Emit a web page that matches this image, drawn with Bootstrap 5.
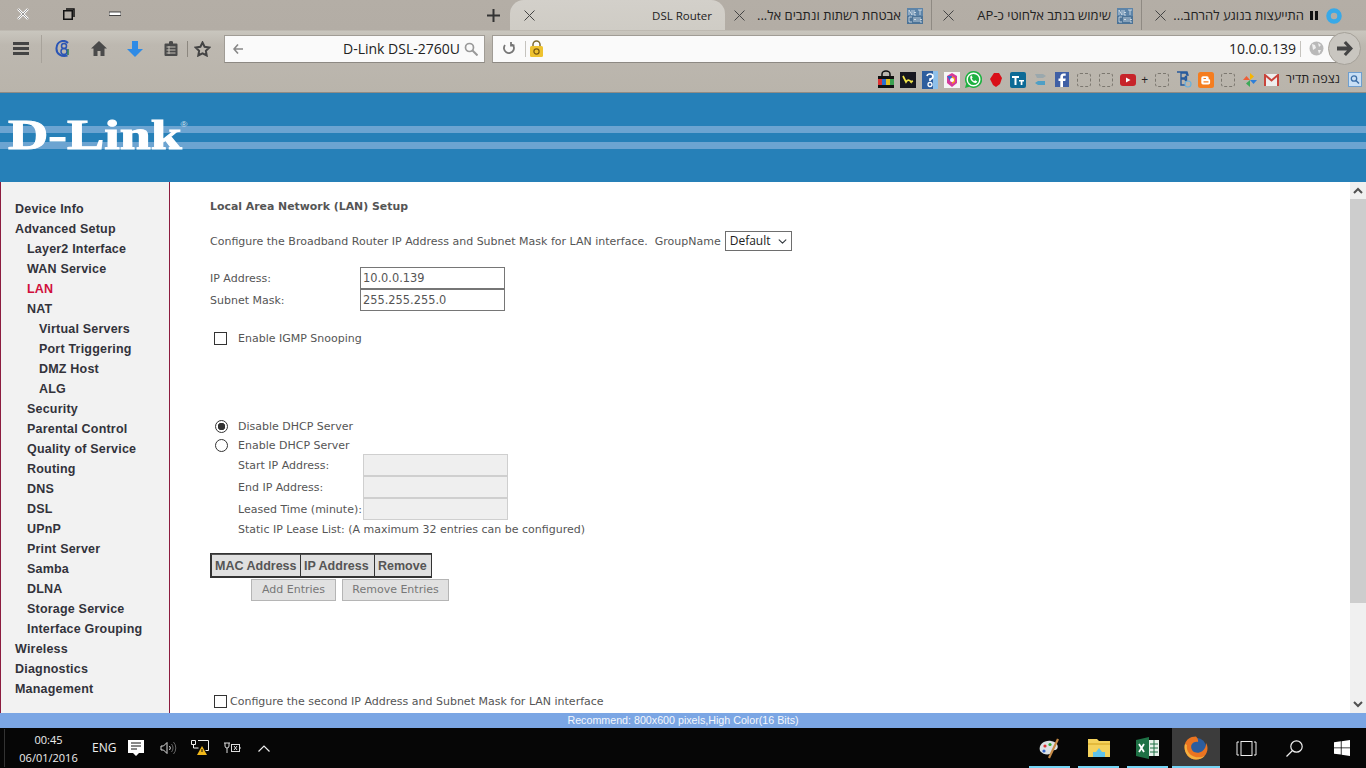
<!DOCTYPE html>
<html lang="en">
<head>
<meta charset="utf-8">
<title>DSL Router</title>
<link href="https://cdn.jsdelivr.net/npm/bootstrap@5.3.0/dist/css/bootstrap.min.css" rel="stylesheet">
<style>
html,body{height:100%;overflow:hidden;margin:0;background:#000}
body{font-family:"DejaVu Sans","Liberation Sans",sans-serif}
.shell{height:768px;width:1366px}
.chromebar{height:93px;flex:none;border-bottom:1px solid #8f8b85;background:linear-gradient(180deg,#b4aea6 0,#b3ada5 30px,#c9c6be 31px,#bdb8b0 45px,#b9b4ab 92px);font-family:"Open Sans","Noto Sans","Liberation Sans",sans-serif;color:#222}
.tabrow{height:30px;flex:none}
.winbtn{width:46px;height:28px}
.newtab{margin-left:339px;width:33px;height:30px}
.tabitem{height:30px;font-size:13px;white-space:nowrap;padding-top:1px}
.tabon{width:215px;background:linear-gradient(180deg,#d3d0ca,#cfccc5);border-radius:14px 14px 0 0;padding:1px 13px 0 10px;font-size:11.5px}
.taboff{padding:1px 8px 0 5px;border-right:1px solid #8f8a83}
.tabw2{width:207px}.tabw3{width:210px}.tabw4{width:224px;border-right:0;padding-right:24px}
.ttl{flex:1;text-align:right;padding-right:6px}
.navrow{height:37px;flex:none}
.hamb{width:42px;border-right:1px solid #a8a39b;height:28px}
.tbtn{width:36px;height:28px}
.tbtn1{margin-left:3px}
.starb{margin-left:-3px}
.tsep{width:1px;height:16px;background:#8c877f;margin:0 -1px 0 -2px}
.addr{height:28px;background:#fafafa;border:1px solid #a09c95;border-bottom-color:#8d8983;font-size:14px;color:#222}
.srch{width:261px;margin-left:4px;padding:0 6px 0 4px}
.urlb{flex:1;margin-left:7px;margin-right:-12px;padding:0 11px 0 6px}
.gocirc{width:33px;height:33px;border-radius:50%;border:1px solid #a5a199;background:#c9c6c0;position:relative;margin-right:5px;flex:none}
.vsep{width:1px;height:16px;background:#c5c3be}
.bookrow{height:25px;margin-top:0;flex:none}
.bk{width:20px;height:20px;margin-left:2px;flex:none;display:flex;align-items:center;justify-content:center}
.bkplus{width:10px;font-size:12px;line-height:1}
.bklast{margin-right:1px}
.bkdash{width:14px;height:14px;border:1px dashed #7c7870;border-radius:3px}
.bktxt{font-size:12.5px;margin:0 3px 0 4px;color:#222;white-space:nowrap}
.banner{height:89px;flex:none;background:linear-gradient(180deg,#2680b8 0,#2680b8 33px,#6ca4d1 33px,#6ca4d1 40px,#2680b8 40px,#2680b8 49px,#6ca4d1 49px,#6ca4d1 56px,#2680b8 56px)}
.logo{font-family:"Liberation Serif",serif;font-weight:700;color:#fff;font-size:42px;line-height:40px;transform:scaleX(1.33);transform-origin:left center;margin-left:8px;margin-top:22px;display:inline-block;-webkit-text-stroke:1px #fff}
.logo sup{font-size:7px;font-weight:400;top:-22px;margin-left:-1px;opacity:.8;font-family:"Liberation Sans",sans-serif;-webkit-text-stroke:0}
.workarea{height:531px;flex:none;background:#fff;overflow:hidden}
.sidemenu{width:170px;flex:none;background:#f2f2f2;border-left:1px solid #8c1c3f;border-right:1px solid #8c1c3f;padding-top:17px}
.sidemenu a{display:block;height:20px;line-height:20px;font-weight:700;font-size:12.5px;font-family:"Liberation Sans",sans-serif;letter-spacing:.2px;color:#33333b;text-decoration:none;white-space:nowrap}
.sidemenu a.lv1{padding-left:14px}.sidemenu a.lv2{padding-left:26px}.sidemenu a.lv3{padding-left:38px}
.sidemenu a.cur{color:#d00f3c}
.pane{flex:1;padding:0 0 0 40px;color:#555;font-size:11px;line-height:14px;white-space:nowrap;overflow:hidden}
.paneh{font-weight:700;font-size:10.9px;margin-top:18px;height:14px;color:#555}
.intro{margin-top:17px;height:20px}
.intro span,.iplab,.igmp span,.dhrow span,.leaselab,.staticl,.second span{padding-top:1px}
.sel{width:67px;height:20px;padding:0 0 0 4px;font-size:12px;line-height:18px;border:1px solid #6e6e6e;border-radius:0;color:#222;margin-left:4px;background-position:right 3px center;background-size:11px 9px;font-family:"Open Sans",sans-serif}
.ipform{margin-top:16px}
.iprow{height:22px}
.iplab{width:150px}
.ipin{width:145px;height:22px;padding:0 2px;border:1px solid #767676;border-radius:0;font-size:11.4px;color:#555;line-height:20px;font-family:"DejaVu Sans",sans-serif}
.ipin.off{background:#efefef;border-color:#cfcfcf}
.form-check-input.box{width:13px;height:13px;margin:0;border:1px solid #333;border-radius:0;flex:none}
.form-check-input.rad{width:13px;height:13px;margin:0;border:1px solid #333;flex:none}
.form-check-input.rad:checked{background-color:#fff;border-color:#333;background-image:radial-gradient(circle,#333 0,#333 3.5px,transparent 4px)}
.igmp{margin-top:20px;height:14px;padding-left:4px;gap:11px}
.dhcp{margin-top:72px;padding-left:5px}
.dhrow{height:19px;gap:10px}
.dhrow2{height:18px}
.leasewrap{padding-left:28px}
.leasew{height:22px}
.leaselab{width:125px}
.staticl{height:17px;line-height:17px}
.macgrid{margin-top:16px;width:222px;border:1px solid #333;border-bottom:2px solid #333;background:#e0e0e0;font-family:"Liberation Sans",sans-serif;font-weight:700;font-size:12.5px;color:#555}
.mcell{height:22px;line-height:22px;padding:0 3px;border-left:1px solid #333;border-top:1px solid #555}
.mw1{width:89px}.mw2{width:74px}.mw3{width:57px}
.actrow{margin-left:41px;gap:6px;margin-top:1px}
.grbtn{height:22px;padding:0;border:1px solid #b5b5b5;border-radius:0;background:#e1e1e1;color:#777;font-size:11px;line-height:20px;font-family:"DejaVu Sans",sans-serif;opacity:1}
.gw1{width:85px}.gw2{width:107px}
.second{margin-top:93px;padding-left:4px;gap:3px}
.sbar{width:16px;flex:none;background:#f0f0f0}
.sbtn{height:17px;background:#f0f0f0}
.sthumb{height:404px;background:#cdcdcd}
.statusline{height:15px;flex:none;background:#7ba6e4;color:#f4f7fc;font:10.7px/15px "Liberation Sans",sans-serif;text-align:center}
.taskb{height:40px;flex:none;background:#060606;color:#eee;font-family:"Open Sans","Noto Sans",sans-serif}
.clockb{width:88px;margin-left:4px;border-left:1px solid #333;text-align:center;font-size:11px;line-height:18px;padding-top:2px}
.trayi{width:32px;height:40px}
.engt{font-size:12px;width:22px;text-align:center;margin-right:6px;flex:none;white-space:nowrap}
.pinb{width:49px;height:40px;position:relative}
.pinb::after{content:"";position:absolute;left:4px;right:4px;bottom:0;height:2px;background:#75d4f5}
.pinon{background:#3c3c3c;width:48px;margin-right:2px}
.pinon::after{left:0;right:0}
.sysb{width:48px;height:40px}
</style>
</head>
<body>
<div class="shell d-flex flex-column">
  <div class="chromebar d-flex flex-column">
    <div class="tabrow d-flex">
      <div class="winbtn d-flex align-items-center justify-content-center"><svg width="12" height="12" viewBox="0 0 12 12"><path d="M1 1l10 10M11 1L1 11" stroke="#fff" stroke-width="2.4"/><path d="M1 1l10 10M11 1L1 11" stroke="#333" stroke-width=".5"/></svg></div>
      <div class="winbtn d-flex align-items-center justify-content-center"><svg width="12" height="12" viewBox="0 0 12 12"><rect x=".75" y="2.75" width="8.5" height="8.5" fill="none" stroke="#111" stroke-width="1.5"/><path d="M3 1h8v8" fill="none" stroke="#111" stroke-width="1.5"/></svg></div>
      <div class="winbtn d-flex align-items-center justify-content-center"><svg width="12" height="6" viewBox="0 0 12 6"><rect y="1" width="12" height="3.4" fill="#fff" stroke="#222" stroke-width=".8"/></svg></div>
      <div class="newtab d-flex align-items-center justify-content-center"><svg width="13" height="13" viewBox="0 0 13 13"><path d="M6.500 0v13M0 6.500h13" stroke="#333" stroke-width="2"/></svg></div>
      <div class="tabitem tabon d-flex align-items-center"><svg width="11" height="11" viewBox="0 0 11 11" class="ms-1"><path d="M.5.5l10 10M10.500.5l-10 10" stroke="#444" stroke-width="1"/></svg><span class="ttl pe-0">DSL Router</span></div>
      <div class="tabitem taboff tabw2 d-flex align-items-center"><svg width="11" height="11" viewBox="0 0 11 11" class="ms-1"><path d="M.5.5l10 10M10.500.5l-10 10" stroke="#444" stroke-width="1"/></svg><span class="ttl" dir="rtl">אבטחת רשתות ונתבים אל...</span><svg width="16" height="16" viewBox="0 0 16 16"><rect width="16" height="16" fill="#5d84a8"/><rect y="8" width="16" height="8" fill="#4c7397"/><path d="M2 7V2l3 5V2M7 2v5h2M7 4.500h2M11 2h4M13 2v5M2 9h3M2 9v5h3M7 9v5M9 9v5M7 11.500h2M11 9v5M13 9v5h2M13 11.500h2" stroke="#dde6ee" stroke-width=".8" fill="none"/></svg></div>
      <div class="tabitem taboff tabw3 d-flex align-items-center"><svg width="11" height="11" viewBox="0 0 11 11" style="margin-left:6px"><path d="M.5.5l10 10M10.500.5l-10 10" stroke="#444" stroke-width="1"/></svg><span class="ttl" dir="rtl">שימוש בנתב אלחוטי כ-AP</span><svg width="16" height="16" viewBox="0 0 16 16"><rect width="16" height="16" fill="#5d84a8"/><rect y="8" width="16" height="8" fill="#4c7397"/><path d="M2 7V2l3 5V2M7 2v5h2M7 4.500h2M11 2h4M13 2v5M2 9h3M2 9v5h3M7 9v5M9 9v5M7 11.500h2M11 9v5M13 9v5h2M13 11.500h2" stroke="#dde6ee" stroke-width=".8" fill="none"/></svg></div>
      <div class="tabitem taboff tabw4 d-flex align-items-center"><svg width="11" height="11" viewBox="0 0 11 11" class="ms-2"><path d="M.5.5l10 10M10.500.5l-10 10" stroke="#444" stroke-width="1"/></svg><span class="ttl" dir="rtl">התייעצות בנוגע להרחב...</span><svg width="8" height="9" viewBox="0 0 8 9" class="me-2"><path d="M0 0h3v9H0zM5 0h3v9H5z" fill="#111"/></svg><svg width="16" height="16" viewBox="0 0 16 16"><circle cx="8" cy="8" r="5.500" fill="none" stroke="#38a9e8" stroke-width="4.500"/></svg></div>
    </div>
    <div class="navrow d-flex align-items-center">
      <div class="hamb d-flex align-items-center justify-content-center"><svg width="16" height="13" viewBox="0 0 16 13"><path d="M0 0h16v3H0zM0 5h16v3H0zM0 10h16v3H0z" fill="#444"/></svg></div>
      <div class="tbtn tbtn1 d-flex align-items-center justify-content-center"><svg width="16" height="18" viewBox="0 0 16 18"><path d="M13 3C9-1 2 1 1.500 8c-.4 6 5 9 11 7.500" fill="none" stroke="#2a55b5" stroke-width="2"/><circle cx="9" cy="6" r="2.500" fill="none" stroke="#2a55b5" stroke-width="1.500"/><circle cx="9" cy="11.500" r="3" fill="none" stroke="#2a55b5" stroke-width="1.500"/><path d="M13 9v6" stroke="#2a7a55" stroke-width="1.500"/></svg></div>
      <div class="tbtn d-flex align-items-center justify-content-center"><svg width="16" height="15" viewBox="0 0 16 15"><path d="M8 0L0 7.500h2.500V15h4v-5h3v5h4V7.500H16z" fill="#4a4a4a"/></svg></div>
      <div class="tbtn d-flex align-items-center justify-content-center"><svg width="16" height="16" viewBox="0 0 16 16"><path d="M5 0h6v8h5l-8 8-8-8h5z" fill="#2f8be6"/></svg></div>
      <div class="tbtn d-flex align-items-center justify-content-center"><svg width="14" height="15" viewBox="0 0 14 15"><path d="M1.500 2.500h3.500V1a2 1 0 0 1 4 0v1.500h3.500a1 1 0 0 1 1 1V14a1 1 0 0 1-1 1h-11a1 1 0 0 1-1-1V3.500a1 1 0 0 1 1-1z" fill="#4a4a4a"/><path d="M2.500 6h9M2.500 9h9M2.500 12h9" stroke="#c3bfb7" stroke-width="1"/><path d="M5 5v8" stroke="#c3bfb7" stroke-width="1"/></svg></div>
      <div class="tsep"></div>
      <div class="tbtn starb d-flex align-items-center justify-content-center"><svg width="17" height="16" viewBox="0 0 17 16"><path d="M8.500 1.500l2.100 4.300 4.700.7-3.400 3.300.8 4.700-4.200-2.200-4.200 2.200.8-4.700L1.700 6.500l4.700-.7z" fill="none" stroke="#444" stroke-width="2"/></svg></div>
      <div class="addr srch d-flex align-items-center"><svg width="10" height="10" viewBox="0 0 10 10" class="ms-1"><path d="M5 .5L1 5l4 4.500M1.500 5H10" fill="none" stroke="#888" stroke-width="1.600"/></svg><span class="flex-grow-1 text-end">D-Link DSL-2760U</span><svg width="14" height="14" viewBox="0 0 14 14" class="ms-1"><circle cx="5.500" cy="5.500" r="4" fill="none" stroke="#999" stroke-width="1.700"/><path d="M8.500 8.500l5 5" stroke="#999" stroke-width="2"/></svg></div>
      <div class="addr urlb d-flex align-items-center"><svg width="14" height="14" viewBox="0 0 14 14" class="ms-1"><path d="M12 3a5 5 0 1 1-6-1.500M6 0v3.500H2.500" transform="matrix(-1 0 0 1 14 0)" fill="none" stroke="#777" stroke-width="1.800"/></svg><div class="vsep ms-2"></div><svg width="13" height="17" viewBox="0 0 13 17" class="ms-1"><path d="M3 7V4.500a3.500 3.500 0 0 1 7 0V7" fill="none" stroke="#7d6a30" stroke-width="1.500"/><rect y="6" width="13" height="11" rx="1.500" fill="#eec22f"/><circle cx="6.500" cy="11.500" r="2.600" fill="none" stroke="#7a5a10" stroke-width="1.200"/></svg><span class="flex-grow-1 text-end">10.0.0.139</span><div class="vsep ms-1"></div><svg width="15" height="15" viewBox="0 0 15 15" class="ms-2 me-1"><circle cx="7.500" cy="7.500" r="7" fill="#b9b9b9"/><path d="M3 3l3 1 1 3-3 2zM9 2l3 2-2 2zM9 9l3 0-2 4z" fill="#efefef"/></svg></div>
      <div class="gocirc d-flex align-items-center justify-content-center"><svg width="16" height="15" viewBox="0 0 16 15"><path d="M9 0l7 7.500-7 7.500-2.300-2.100L10 9.500H0v-4h10L6.700 2.100z" fill="#444"/></svg></div>
    </div>
    <div class="bookrow d-flex justify-content-end align-items-center">
      <div class="bk"><svg width="20" height="19" viewBox="0 0 20 19"><path d="M6 7V4a4 3 0 0 1 8 0v3" fill="none" stroke="#111" stroke-width="1.500"/><rect x="2" y="6" width="16" height="3" fill="#111"/><path d="M2 9h4v6H2z" fill="#d33"/><path d="M6 9h4v6H6z" fill="#2a6fd0"/><path d="M10 9h4v6h-4z" fill="#e0c020"/><path d="M14 9h4v6h-4z" fill="#3aa050"/><rect x="2" y="15" width="16" height="3" fill="#111"/></svg></div>
      <div class="bk"><svg width="16" height="16" viewBox="0 0 16 16"><rect width="16" height="16" fill="#17171f"/><path d="M3 4l3 6c2-3 4-2 6 1M10 10l3-1" fill="none" stroke="#f2e64a" stroke-width="1.700"/></svg></div>
      <div class="bk"><svg width="16" height="18" viewBox="0 0 16 18"><rect width="16" height="18" fill="#2e5e9e"/><rect x="11" width="5" height="18" fill="#8ec0ea"/><path d="M5 5a3 2.500 0 1 1 3 3v2" fill="none" stroke="#fff" stroke-width="1.700"/><circle cx="8" cy="13.500" r="2" fill="none" stroke="#fff" stroke-width="1.300"/></svg></div>
      <div class="bk"><svg width="16" height="16" viewBox="0 0 16 16"><rect width="16" height="16" fill="#f5f5f5"/><path d="M8 1l5 3v7l-5 4-5-4V4z" fill="#d5399b"/><path d="M8 4l3 2v4l-3 2z" fill="#f39a1e"/><path d="M3 4l5 0-2 5z" fill="#2e6fd1"/><circle cx="8" cy="8" r="2" fill="#fff"/></svg></div>
      <div class="bk"><svg width="17" height="17" viewBox="0 0 17 17"><path d="M8.500 0a8.500 8.500 0 0 0-7.300 12.800L0 17l4.300-1.200A8.500 8.500 0 1 0 8.500 0z" fill="#1fb141"/><circle cx="8.500" cy="8.500" r="6.300" fill="none" stroke="#fff" stroke-width="1.400"/><path d="M5.800 4.800c-1.500 2 .5 5 1.800 6 1.500 1.200 3 1.800 4 .7l.7-1-2-1.200-1 .8c-1-.4-2-1.500-2.500-2.700l.8-1-1-2z" fill="#fff"/></svg></div>
      <div class="bk"><svg width="12" height="14" viewBox="0 0 12 14"><path d="M4 0h5l3 5-2 6-4 3-3-2-3-6z" fill="#d90f18"/></svg></div>
      <div class="bk"><svg width="16" height="16" viewBox="0 0 16 16"><rect width="16" height="16" rx="2" fill="#0d6a96"/><path d="M2 4h7v2H6.500v7h-2V6H2zM9 8h5v1.500h-1.600V13h-1.700V9.500H9z" fill="#fff"/></svg></div>
      <div class="bk"><svg width="14" height="15" viewBox="0 0 14 15"><path d="M2 2h8l3 2-3 2H4z" fill="#9aa8ad"/><path d="M12 9H5L2 11l3 2h7z" fill="#4f9fc5"/></svg></div>
      <div class="bk"><svg width="14" height="15" viewBox="0 0 14 15"><rect width="14" height="15" fill="#3f5fa5"/><path d="M8 15V9h2.300l.4-2.500H8V5c0-.8.300-1.200 1.200-1.200h1.500V1.500H8.700C6.500 1.500 5.300 2.800 5.300 5v1.500H3.500V9h1.800v6z" fill="#fff"/></svg></div>
      <div class="bk"><div class="bkdash"></div></div>
      <div class="bk"><div class="bkdash"></div></div>
      <div class="bk"><svg width="16" height="12" viewBox="0 0 16 12"><rect width="16" height="12" rx="3" fill="#c7242a"/><path d="M6 3.500v5l4.500-2.500z" fill="#fff"/></svg></div>
      <div class="bk bkplus">+</div>
      <div class="bk"><div class="bkdash"></div></div>
      <div class="bk"><svg width="17" height="17" viewBox="0 0 17 17"><path d="M2 1h10l1 3h-1l-1-2H6v5h4l.5-1.500h1v4h-1L10 8H6v6h4" fill="none" stroke="#275a9c" stroke-width="1.400"/><circle cx="13" cy="13" r="3" fill="none" stroke="#6ab0dc" stroke-width="1.200"/></svg></div>
      <div class="bk"><svg width="16" height="16" viewBox="0 0 16 16"><rect width="16" height="16" rx="2.500" fill="#f57d1f"/><path d="M5 4.200h4a1.700 1.700 0 0 1 1.700 1.700v1.300h.4a1 1 0 0 1 1 1v2.600a1.700 1.700 0 0 1-1.700 1.700H5a1.700 1.700 0 0 1-1.700-1.700V5.900A1.700 1.700 0 0 1 5 4.200z" fill="#fff"/><path d="M5.500 6.500h2.500M5.500 9.800h5" stroke="#f57d1f" stroke-width="1.200"/></svg></div>
      <div class="bk"><div class="bkdash"></div></div>
      <div class="bk"><svg width="16" height="16" viewBox="0 0 16 16"><path d="M8 8V1l4 3.500z" fill="#f7b500"/><path d="M8 8h7l-3.500 4z" fill="#2e7fd8"/><path d="M8 8v7l-4-3.500z" fill="#3ba957"/><path d="M8 8H1l3.500-4z" fill="#ee5e36"/></svg></div>
      <div class="bk"><svg width="15" height="12" viewBox="0 0 15 12"><rect width="15" height="12" fill="#eee"/><path d="M1 12V1l6.500 5.500L14 1v11" fill="none" stroke="#c9443b" stroke-width="2"/></svg></div>
      <div class="bktxt" dir="rtl">נצפה תדיר</div>
      <div class="bk bklast"><svg width="14" height="15" viewBox="0 0 14 15"><rect x=".5" y=".5" width="13" height="14" fill="#c8dff5" stroke="#6f9fcf"/><circle cx="6" cy="6.500" r="2.700" fill="none" stroke="#3c6fa8" stroke-width="1.300"/><path d="M8 8.500l3 3" stroke="#3c6fa8" stroke-width="1.500"/></svg></div>
    </div>
  </div>

  <div class="banner"><span class="logo">D-Link<sup>®</sup></span></div>

  <div class="workarea d-flex">
    <nav class="sidemenu">
      <a class="lv1" href="#">Device Info</a>
      <a class="lv1" href="#">Advanced Setup</a>
      <a class="lv2" href="#">Layer2 Interface</a>
      <a class="lv2" href="#">WAN Service</a>
      <a class="lv2 cur" href="#">LAN</a>
      <a class="lv2" href="#">NAT</a>
      <a class="lv3" href="#">Virtual Servers</a>
      <a class="lv3" href="#">Port Triggering</a>
      <a class="lv3" href="#">DMZ Host</a>
      <a class="lv3" href="#">ALG</a>
      <a class="lv2" href="#">Security</a>
      <a class="lv2" href="#">Parental Control</a>
      <a class="lv2" href="#">Quality of Service</a>
      <a class="lv2" href="#">Routing</a>
      <a class="lv2" href="#">DNS</a>
      <a class="lv2" href="#">DSL</a>
      <a class="lv2" href="#">UPnP</a>
      <a class="lv2" href="#">Print Server</a>
      <a class="lv2" href="#">Samba</a>
      <a class="lv2" href="#">DLNA</a>
      <a class="lv2" href="#">Storage Service</a>
      <a class="lv2" href="#">Interface Grouping</a>
      <a class="lv1" href="#">Wireless</a>
      <a class="lv1" href="#">Diagnostics</a>
      <a class="lv1" href="#">Management</a>
    </nav>
    <main class="pane">
      <div class="paneh">Local Area Network (LAN) Setup</div>
      <div class="intro d-flex align-items-center"><span>Configure the Broadband Router IP Address and Subnet Mask for LAN interface.&nbsp; GroupName</span>
        <select class="form-select sel d-inline-block"><option>Default</option></select></div>
      <div class="ipform">
        <div class="iprow d-flex align-items-center"><div class="iplab">IP Address:</div><input class="form-control ipin" value="10.0.0.139"></div>
        <div class="iprow d-flex align-items-center"><div class="iplab">Subnet Mask:</div><input class="form-control ipin" value="255.255.255.0"></div>
      </div>
      <div class="igmp d-flex align-items-center"><input type="checkbox" class="form-check-input box"><span>Enable IGMP Snooping</span></div>
      <div class="dhcp">
        <div class="dhrow d-flex align-items-center"><input type="radio" name="dh" class="form-check-input rad" checked><span>Disable DHCP Server</span></div>
        <div class="dhrow dhrow2 d-flex align-items-center"><input type="radio" name="dh" class="form-check-input rad"><span>Enable DHCP Server</span></div>
      </div>
      <div class="leasewrap">
        <div class="leasew d-flex align-items-center"><div class="leaselab">Start IP Address:</div><input class="form-control ipin off"></div>
        <div class="leasew d-flex align-items-center"><div class="leaselab">End IP Address:</div><input class="form-control ipin off"></div>
        <div class="leasew d-flex align-items-center"><div class="leaselab">Leased Time (minute):</div><input class="form-control ipin off"></div>
        <div class="staticl">Static IP Lease List: (A maximum 32 entries can be configured)</div>
      </div>
      <div class="macgrid d-flex">
        <div class="mcell mw1">MAC Address</div><div class="mcell mw2">IP Address</div><div class="mcell mw3">Remove</div>
      </div>
      <div class="actrow d-flex">
        <button type="button" class="btn grbtn gw1">Add Entries</button>
        <button type="button" class="btn grbtn gw2">Remove Entries</button>
      </div>
      <div class="second d-flex align-items-center"><input type="checkbox" class="form-check-input box"><span>Configure the second IP Address and Subnet Mask for LAN interface</span></div>
    </main>
    <div class="sbar d-flex flex-column">
      <div class="sbtn d-flex align-items-center justify-content-center"><svg width="10" height="7" viewBox="0 0 10 7"><path d="M1 6l4-4 4 4" fill="none" stroke="#505050" stroke-width="2"/></svg></div>
      <div class="sthumb"></div>
      <div class="flex-grow-1"></div>
      <div class="sbtn d-flex align-items-center justify-content-center"><svg width="10" height="7" viewBox="0 0 10 7"><path d="M1 1l4 4 4-4" fill="none" stroke="#505050" stroke-width="2"/></svg></div>
    </div>
  </div>

  <div class="statusline">Recommend: 800x600 pixels,High Color(16 Bits)</div>

  <div class="taskb d-flex align-items-center">
    <div class="clockb">00:45<br>06/01/2016</div>
    <div class="engt">ENG</div>
    <div class="trayi d-flex align-items-center justify-content-center"><svg width="16" height="16" viewBox="0 0 16 16"><path d="M0 0h16v13h-5l-3 3-3-3H0z" fill="#fff"/><path d="M3 3h10M3 6h10M3 9h6" stroke="#111" stroke-width="1"/></svg></div>
    <div class="trayi d-flex align-items-center justify-content-center"><svg width="17" height="14" viewBox="0 0 17 14"><path d="M1 5h2.500L7 1.500v11L3.500 9H1z" fill="none" stroke="#ddd"/><path d="M9.500 5a3 3 0 0 1 0 4" fill="none" stroke="#ddd"/><path d="M11.500 3a6 6 0 0 1 0 8M13.500 1a9 9 0 0 1 0 12" fill="none" stroke="#666"/></svg></div>
    <div class="trayi d-flex align-items-center justify-content-center"><svg width="18" height="16" viewBox="0 0 18 16"><path d="M.5.500h4v4h-4zM2.500 4.500V8M2.500 8h5M7 .5h10.500v10h-3" fill="none" stroke="#eee"/><path d="M11 6l5 9H6z" fill="#f1b81a"/><path d="M11 9v3" stroke="#111"/></svg></div>
    <div class="trayi d-flex align-items-center justify-content-center"><svg width="17" height="12" viewBox="0 0 17 12"><path d="M1 1v3a2 2 0 0 0 4 0V1M0 1h6M3 6v5" fill="none" stroke="#ddd"/><rect x="7.500" y="2.500" width="8" height="7" fill="none" stroke="#ddd"/><path d="M16 5v2" stroke="#ddd"/><path d="M10 4l3 4M13 4l-3 4" stroke="#ddd"/></svg></div>
    <div class="trayi d-flex align-items-center justify-content-center"><svg width="12" height="7" viewBox="0 0 12 7"><path d="M.5 6.500L6 1l5.500 5.500" fill="none" stroke="#eee" stroke-width="1.200"/></svg></div>
    <div class="flex-grow-1"></div>
    <div class="pinb d-flex align-items-center justify-content-center"><svg width="24" height="24" viewBox="0 0 24 24"><path d="M2 15C0 8 7 4 13 5c6 1 8 5 6 8-2 2-4 0-5 3-1 3-8 4-12-1z" fill="#dbe1e4"/><circle cx="7" cy="10" r="1.600" fill="#d33"/><circle cx="12" cy="8.500" r="1.600" fill="#3a3"/><circle cx="6" cy="15" r="1.600" fill="#36c"/><path d="M11 22L20 3" stroke="#c68a46" stroke-width="2.200"/></svg></div>
    <div class="pinb d-flex align-items-center justify-content-center"><svg width="22" height="18" viewBox="0 0 22 18"><path d="M0 0h9l2 2h11v16H0z" fill="#f4d25c"/><path d="M0 4h22v2H0z" fill="#e3ba3c"/><path d="M5 18v-5h3l3-4 3 4h3v5z" fill="#5fc3ea"/></svg></div>
    <div class="pinb d-flex align-items-center justify-content-center"><svg width="23" height="22" viewBox="0 0 23 22"><path d="M0 3l13-3v22L0 19z" fill="#1e7145"/><path d="M13 3h10v16H13z" fill="#e7f1ea"/><path d="M14 7h8M14 11h8M14 15h8M18 3v16" stroke="#1e7145"/><path d="M3 7l5 8M8 7l-5 8" stroke="#fff" stroke-width="1.800"/></svg></div>
    <div class="pinb pinon d-flex align-items-center justify-content-center"><svg width="24" height="24" viewBox="0 0 24 24"><circle cx="13" cy="11" r="9" fill="#2d5d9e"/><path d="M12 .5C6 .5 2 4 1 8 -1 15 4 23.500 12 23.500c7 0 11.500-5.500 11.500-11 0-2-.5-4-1.500-5.500.3 3-1 6-3.500 8-3 2.300-7 2.300-9.500.3C7 13 6.500 10 8 8c1.500-2 4-2.500 6-2 .5-2-.5-4-2-5.500z" fill="#ea7421"/><path d="M1 8c-2 7 3 15.500 11 15.500 4 0 7-1.500 9-4-3 2-7 2.500-11 1C5 18.500 2 14 3 9z" fill="#f4b03f"/></svg></div>
    <div class="sysb d-flex align-items-center justify-content-center"><svg width="21" height="15" viewBox="0 0 21 15"><path d="M3 1H1v13h2M18 1h2v13h-2" fill="none" stroke="#eee"/><rect x="5" y=".5" width="11" height="14" fill="none" stroke="#eee"/></svg></div>
    <div class="sysb d-flex align-items-center justify-content-center"><svg width="17" height="17" viewBox="0 0 17 17"><circle cx="10.500" cy="6.500" r="5.700" fill="none" stroke="#eee" stroke-width="1.200"/><path d="M6.500 10.500L.5 16.500" stroke="#eee" stroke-width="1.200"/></svg></div>
    <div class="sysb d-flex align-items-center justify-content-center"><svg width="16" height="16" viewBox="0 0 16 16"><path d="M0 2.300l6.800-1v6.200H0zM7.600 1.200L16 0v7.500H7.600zM0 8.300h6.800v6.300L0 13.700zM7.600 8.300H16V16l-8.400-1.200z" fill="#fff"/></svg></div>
  </div>
</div>
</body>
</html>
